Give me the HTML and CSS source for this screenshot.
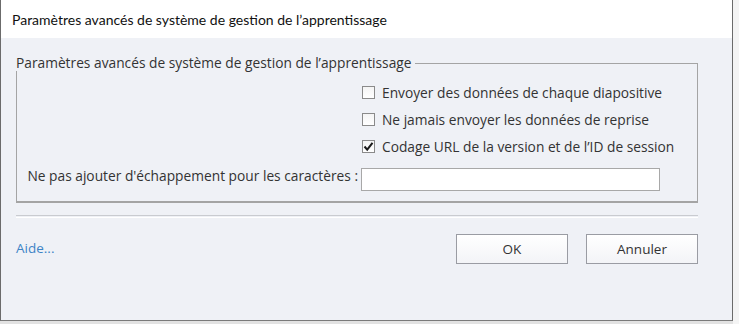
FILE: index.html
```html
<!DOCTYPE html>
<html lang="fr">
<head>
<meta charset="utf-8">
<title>Paramètres avancés</title>
<link rel="stylesheet" href="styles.css">
</head>
<body>
<div class="window">
  <div class="titlebar">Paramètres avancés de système de gestion de l’apprentissage</div>
  <div class="content">
    <fieldset class="group">
      <legend>Paramètres avancés de système de gestion de l’apprentissage</legend>
      <div class="grid">
        <label class="check"><span class="box"></span>Envoyer des données de chaque diapositive</label>
        <label class="check"><span class="box"></span>Ne jamais envoyer les données de reprise</label>
        <label class="check"><span class="box checked"><svg viewBox="0 0 13 13" width="13" height="13"><path d="M2.5 6.5 L5.2 9.6 L10.5 2.8" fill="none" stroke="#1a1a1a" stroke-width="2"/></svg></span>Codage URL de la version et de l’ID de session</label>
        <span class="field-label">Ne pas ajouter d'échappement pour les caractères :</span>
        <span class="input"></span>
      </div>
    </fieldset>
    <div class="separator"></div>
    <div class="footer">
      <a class="help">Aide...</a>
      <div class="buttons">
        <button class="btn">OK</button>
        <button class="btn">Annuler</button>
      </div>
    </div>
  </div>
</div>
<div class="below"></div>
</body>
</html>
```
FILE: styles.css
```css
html, body {
  margin: 0;
  padding: 0;
}
body {
  width: 739px;
  height: 324px;
  background: #f4f4f4;
  overflow: hidden;
  font-family: "Open Sans", "Noto Sans", sans-serif;
  color: #333;
}
.window {
  width: 731px;
  height: 320px;
  border-left: 1px solid #6b6b6b;
  border-right: 1px solid #6b6b6b;
  border-bottom: 1px solid #7a7a7a;
  display: flex;
  flex-direction: column;
  background: #eff1f6;
}
.below {
  height: 3px;
  background: #e2e2e2;
  width: 733px;
}
.titlebar {
  height: 38px;
  flex: none;
  background: #ffffff;
  display: flex;
  align-items: center;
  padding-left: 11px;
  font-family: "Lato", "Open Sans", sans-serif;
  font-size: 14px;
  color: #111;
}
.content {
  flex: 1;
  padding: 0 34px 0 15px;
}
.group {
  margin: 17px 0 0 0;
  padding: 0;
  border: 1px solid #a4a4a4;
  border-bottom-width: 2px;
  height: 148px;
  box-sizing: border-box;
}
.group legend {
  padding: 0 3px 0 0;
  margin-left: -1px;
  font-size: 13.75px;
  color: #333;
  line-height: 16px;
}
.grid {
  display: grid;
  grid-template-columns: 344px 1fr;
  padding-top: 8px;
}
.check {
  grid-column: 2;
  display: flex;
  align-items: center;
  height: 27px;
  font-size: 13.75px;
  color: #333;
  margin-left: 1px;
  white-space: nowrap;
}
.box {
  flex: none;
  width: 11px;
  height: 11px;
  border: 1px solid #8a8a8a;
  background: linear-gradient(#f4f4f4, #ffffff);
  margin-right: 7px;
  position: relative;
}
.box svg {
  position: absolute;
  left: -1px;
  top: -1px;
}
.field-label {
  grid-column: 1;
  justify-self: end;
  align-self: center;
  font-size: 13.75px;
  padding-right: 3px;
  color: #333;
  white-space: nowrap;
}
.input {
  grid-column: 2;
  height: 21px;
  width: 297px;
  border: 1px solid #a8a8a8;
  background: #fff;
  margin-top: 8px;
}
.separator {
  margin-top: 12px;
  height: 1px;
  border-top: 1px solid #c9cbd0;
  border-bottom: 1px solid #ffffff;
}
.footer {
  display: flex;
  justify-content: space-between;
  align-items: center;
  margin-top: 16px;
}
.help {
  color: #3d84c6;
  font-size: 13.5px;
  margin-top: -2px;
}
.buttons {
  display: flex;
  gap: 18px;
}
.btn {
  width: 112px;
  height: 30px;
  border: 1px solid #9a9ca3;
  background: linear-gradient(#ffffff, #f3f4f7);
  font-family: "Open Sans", "Noto Sans", sans-serif;
  font-size: 13.5px;
  color: #333;
  padding: 0;
}
```
